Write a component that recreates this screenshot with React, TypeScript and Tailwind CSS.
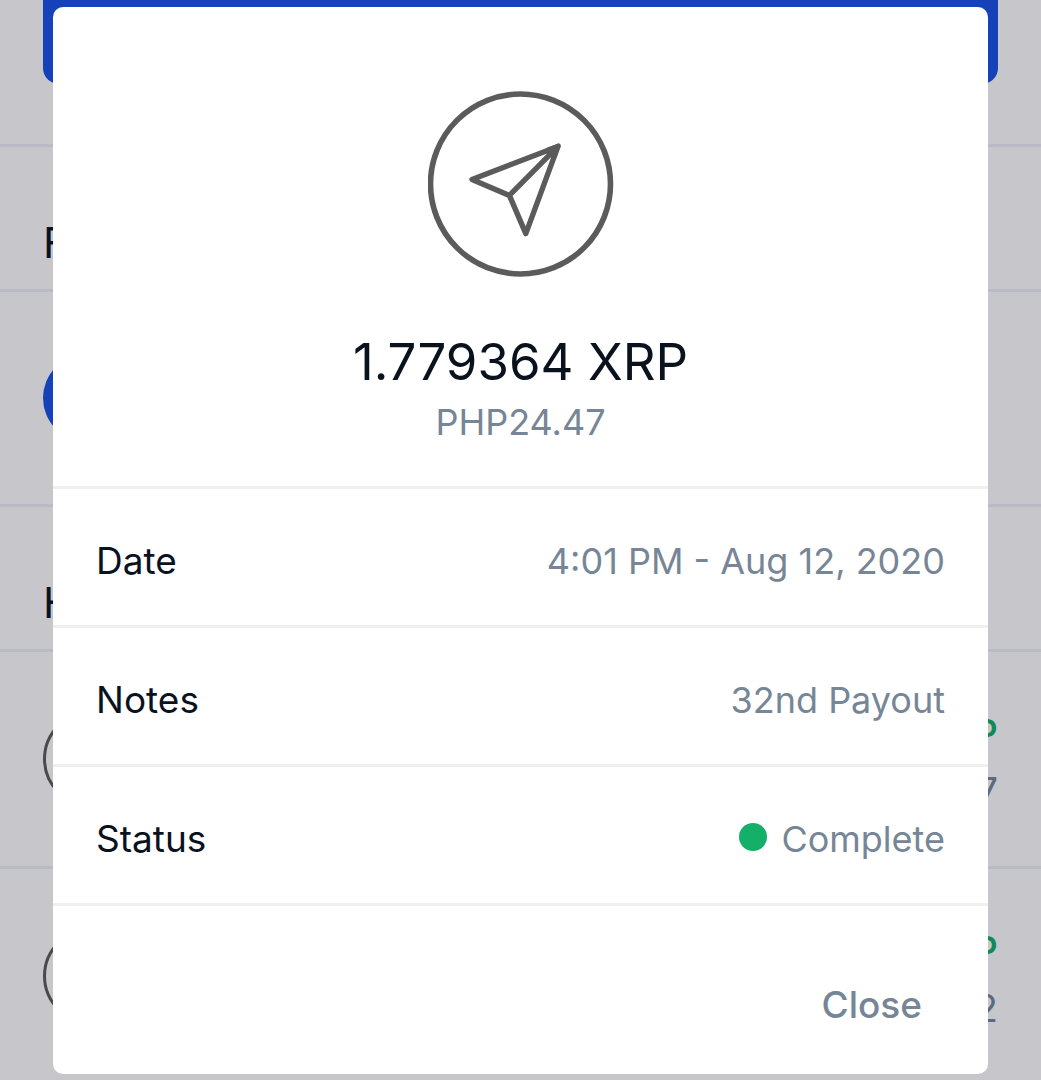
import { useState } from "react";

const details = [
  { label: "Date", value: "4:01 PM - Aug 12, 2020" },
  { label: "Notes", value: "32nd Payout" },
  { label: "Status", value: "Complete", dot: true },
];

const history = [
  { unit: "P", digit: "7" },
  { unit: "P", digit: "2" },
];

function SendIcon() {
  return (
    <svg
      viewBox="0 0 186 186"
      className="h-[186px] w-[186px]"
      fill="none"
      stroke="#5b5b5b"
      strokeLinejoin="round"
      strokeLinecap="round"
      aria-hidden="true"
    >
      <circle cx="92.5" cy="93" r="90" strokeWidth="5.6" />
      <path
        d="M130 55.4 44 88.4l37.4 16 16.4 38.2L130 55.4ZM81.4 104.4 130 55.4"
        strokeWidth="5.4"
      />
      <path d="M120 58 131 54 127.5 65Z" fill="#5b5b5b" strokeWidth="3" />
    </svg>
  );
}

// Wallet page that sits dimmed under the dialog
function WalletPage() {
  return (
    <div className="absolute inset-0 overflow-hidden" aria-hidden="true">
      <div className="border-b-[3px] border-[#b9bac3] px-[43px] pb-[60px]">
        <div className="h-[84px] rounded-b-2xl bg-[#1542b8]" />
      </div>
      <div className="border-b-[3px] border-[#b9bac3] px-[43px] pt-[72px] pb-[22px] text-[42px] leading-[48px]">
        F
      </div>
      <div className="border-b-[3px] border-[#b9bac3] px-[43px] py-[62px]">
        <div className="h-[88px] w-[88px] rounded-full bg-[#1542b8]" />
      </div>
      <div className="border-b-[3px] border-[#b9bac3] px-[43px] pt-[72px] pb-[22px] text-[42px] leading-[48px]">
        H
      </div>
      {history.map((item) => (
        <div
          key={item.digit}
          className="flex items-center justify-between border-b-[3px] border-[#b9bac3] px-[43px] py-[46px]"
        >
          <div className="h-24 w-24 rounded-full border-[3px] border-[#4a4a4c]" />
          <div className="pt-[6px] text-right text-[38px] leading-[58px]">
            <p className="font-medium text-[#118a56]">{item.unit}</p>
            <p className="text-[#5d6a7d]">{item.digit}</p>
          </div>
        </div>
      ))}
    </div>
  );
}

export default function App() {
  const [open, setOpen] = useState(true);

  return (
    <main className="relative min-h-screen bg-[#c7c7cb] font-['Inter',sans-serif] text-[#0a121e]">
      <WalletPage />
      {open && (
        <div className="relative px-[53px] pt-[7px] pb-[6px]">
          <section
            role="dialog"
            aria-labelledby="amount"
            className="rounded-[10px] bg-white"
          >
            <header className="flex flex-col items-center border-b-[3px] border-[#f0f0f3] pt-[84px] pb-10">
              <SendIcon />
              <h1 id="amount" className="mt-14 text-[51px] leading-[58px]">
                1.779364 XRP
              </h1>
              <p className="mt-[7px] text-[36px] leading-[48px] text-[#768696]">
                PHP24.47
              </p>
            </header>

            <dl className="leading-[48px]">
              {details.map((row) => (
                <div
                  key={row.label}
                  className="flex items-center justify-between border-b-[3px] border-[#f0f0f3] px-[43px] pt-12 pb-10"
                >
                  <dt className="text-[37px]">{row.label}</dt>
                  <dd className="flex items-center gap-[14px] text-[36px] text-[#768696]">
                    {row.dot && (
                      <span className="mb-1 h-7 w-7 rounded-full bg-[#14b06a]" />
                    )}
                    {row.value}
                  </dd>
                </div>
              ))}
            </dl>

            <footer className="flex justify-end px-[66px] pt-[75px] pb-[45px]">
              <button
                type="button"
                onClick={() => setOpen(false)}
                className="text-[37px] leading-[48px] font-medium text-[#768696]"
              >
                Close
              </button>
            </footer>
          </section>
        </div>
      )}
    </main>
  );
}
